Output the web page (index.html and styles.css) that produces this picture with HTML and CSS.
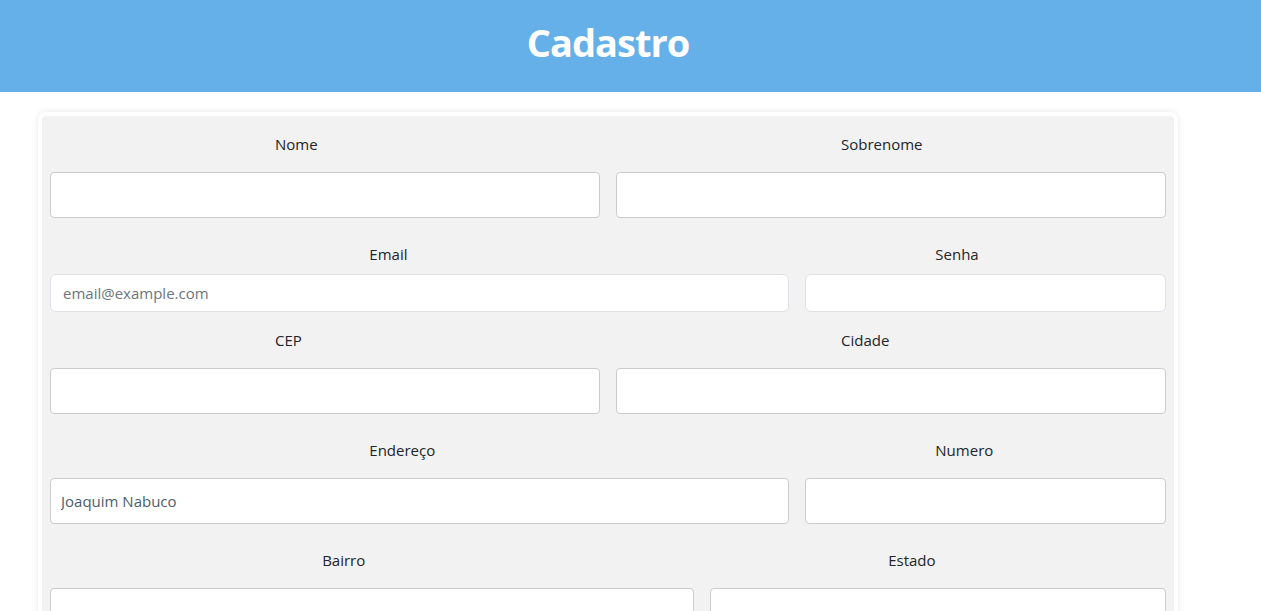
FILE: index.html
```html
<!DOCTYPE html>
<html lang="pt-BR">
<head>
<meta charset="utf-8">
<title>Cadastro</title>
<link rel="stylesheet" href="styles.css">
</head>
<body>
<header class="topbar">
  <h1 class="title">Cadastro</h1>
</header>
<main class="page">
  <form class="card">
    <div class="row row-tall">
      <div class="col col-6">
        <label class="field-label" for="nome">Nome</label>
        <input class="input input-tall" id="nome" type="text">
      </div>
      <div class="col col-6">
        <label class="field-label" for="sobrenome">Sobrenome</label>
        <input class="input input-tall" id="sobrenome" type="text">
      </div>
    </div>
    <div class="row row-compact">
      <div class="col col-8">
        <label class="field-label" for="email">Email</label>
        <input class="input input-compact" id="email" type="email" placeholder="email@example.com">
      </div>
      <div class="col col-4">
        <label class="field-label" for="senha">Senha</label>
        <input class="input input-compact" id="senha" type="password">
      </div>
    </div>
    <div class="row row-tall">
      <div class="col col-6">
        <label class="field-label" for="cep">CEP</label>
        <input class="input input-tall" id="cep" type="text">
      </div>
      <div class="col col-6">
        <label class="field-label" for="cidade">Cidade</label>
        <input class="input input-tall" id="cidade" type="text">
      </div>
    </div>
    <div class="row row-tall">
      <div class="col col-8">
        <label class="field-label" for="endereco">Endereço</label>
        <input class="input input-tall input-value" id="endereco" type="text" value="Joaquim Nabuco">
      </div>
      <div class="col col-4">
        <label class="field-label" for="numero">Numero</label>
        <input class="input input-tall" id="numero" type="text">
      </div>
    </div>
    <div class="row row-tall">
      <div class="col col-7">
        <label class="field-label" for="bairro">Bairro</label>
        <input class="input input-tall" id="bairro" type="text">
      </div>
      <div class="col col-5">
        <label class="field-label" for="estado">Estado</label>
        <input class="input input-tall" id="estado" type="text">
      </div>
    </div>
  </form>
</main>
</body>
</html>
```

FILE: styles.css
```css
* {
  box-sizing: border-box;
}

body {
  margin: 0;
  background: #ffffff;
  font-family: "Open Sans", "Noto Sans", "Liberation Sans", sans-serif;
  font-size: 15px;
  line-height: 1.5;
  color: #212529;
}

.topbar {
  height: 92px;
  background: #66b0ea;
  display: flex;
  align-items: center;
  justify-content: center;
  padding-right: 45px;
  padding-bottom: 8px;
}

.title {
  margin: 0;
  font-size: 38px;
  line-height: 48px;
  font-weight: 700;
  letter-spacing: -1px;
  color: #ffffff;
}

.page {
  width: 1216px;
  padding-top: 20px;
}

.card {
  width: 1140px;
  margin: 0 auto;
  background: #f2f2f2;
  border: 4px solid #ffffff;
  border-radius: 8px;
  box-shadow: 0 0 6px rgba(0, 0, 0, 0.09);
  padding: 16px 8px 24px;
}

.row {
  display: grid;
  grid-template-columns: repeat(12, 1fr);
  column-gap: 16px;
}

.col-4 { grid-column: span 4; }
.col-5 { grid-column: span 5; }
.col-6 { grid-column: span 6; }
.col-7 { grid-column: span 7; }
.col-8 { grid-column: span 8; }

.col {
  display: flex;
  flex-direction: column;
}

.field-label {
  display: block;
  width: 100px;
  margin: 0 auto;
  line-height: 24px;
  white-space: nowrap;
}

.row-tall {
  margin-bottom: 24px;
}

.row-tall .field-label {
  margin-bottom: 16px;
}

.row-compact {
  margin-bottom: 16px;
}

.row-compact .field-label {
  margin-bottom: 8px;
}

.input {
  display: block;
  width: 100%;
  font-family: inherit;
  font-size: 15px;
  background: #ffffff;
  color: #212529;
  outline: none;
}

.input-tall {
  height: 46px;
  padding: 0 10px;
  border: 1px solid #cccccc;
  border-radius: 4px;
}

.input-compact {
  height: 38px;
  padding: 0 12px;
  border: 1px solid #dee2e6;
  border-radius: 6px;
}

.input-compact::placeholder {
  color: #6c757d;
  opacity: 1;
}

.input-value {
  color: #4e5d6c;
}
```
